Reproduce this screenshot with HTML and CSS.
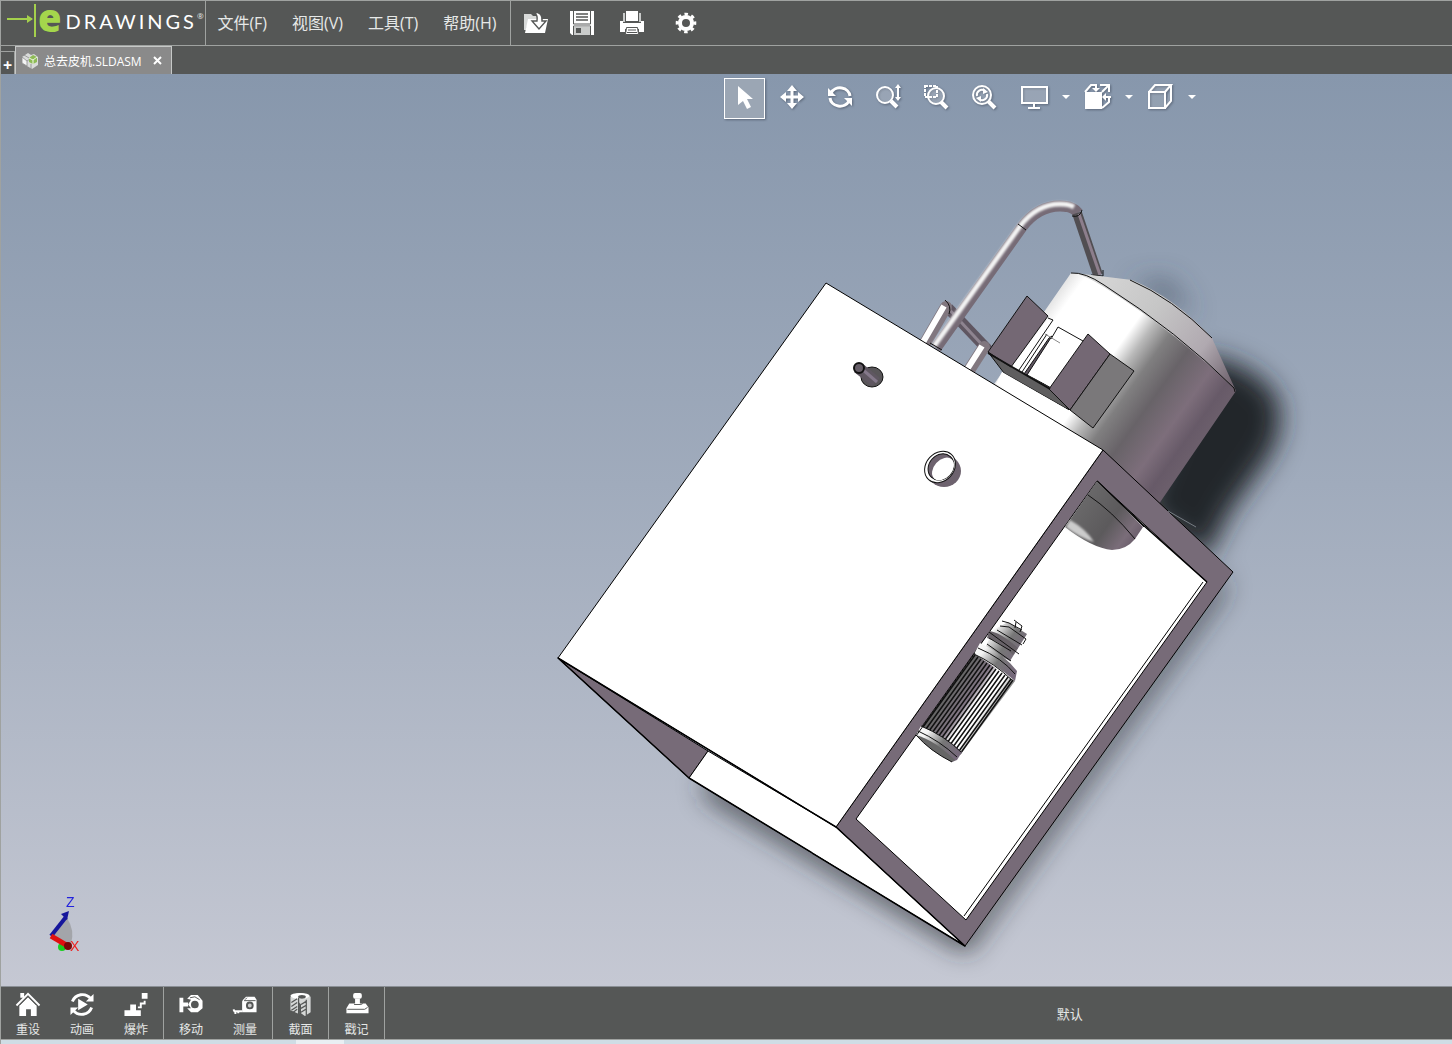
FILE: index.html
```
<!DOCTYPE html>
<html lang="zh-CN">
<head>
    <meta charset="UTF-8">
    <title>eDrawings</title>
    <link rel="stylesheet" href="styles.css">
</head>
<body>
    <div class="window">
        <header class="menubar">
            <div class="brand">
                <svg class="brand-mark" width="32" height="36" viewBox="0 0 32 36">
                    <path d="M1 16H26" stroke="#a4d04c" stroke-width="2"/>
                    <path d="M21 12L27 16L21 20Z" fill="#a4d04c"/>
                    <path d="M29 1V34" stroke="#a4d04c" stroke-width="2"/>
                </svg>
                <span class="brand-e">e</span>
                <span class="brand-name">DRAWINGS</span>
                <span class="brand-reg">®</span>
            </div>
            <nav class="menus">
                <button>文件(F)</button>
                <button>视图(V)</button>
                <button>工具(T)</button>
                <button>帮助(H)</button>
            </nav>
            <div class="file-tools">
                <button aria-label="打开">
                    <svg width="26" height="26" viewBox="0 0 26 26">
                        <path d="M1 4h7l2 2h9v3H6L3 20H1z" fill="#d8dad9"/>
                        <path d="M2 23L5 9h20l-3 14z" fill="#fff"/>
                        <path d="M11 2q9 0 8 9h4l-7 8-7-8h5q1-6-3-9z" fill="#fff" stroke="#555756" stroke-width="1.400"/>
                    </svg>
                </button>
                <button aria-label="保存">
                    <svg width="26" height="26" viewBox="0 0 26 26">
                        <path d="M1 1h24v24H3l-2-2z" fill="#fff"/>
                        <path d="M4.500 1v13h17V1M4.500 25v-9h17v9" fill="none" stroke="#555756"/>
                        <path d="M7 4h12M7 7h12M7 10h12" stroke="#555756" stroke-width="1.300"/>
                        <path d="M5 16.500h16V25H5z" fill="#c9cbca"/>
                        <path d="M7 18h5v5H7z" fill="#555756"/>
                    </svg>
                </button>
                <button class="wide" aria-label="打印">
                    <svg width="26" height="26" viewBox="0 0 26 26">
                        <path d="M7 1h12v10H7zM1 11h3v2h18v-2h3v11h-5v-4H6v4H1z" fill="#fff"/>
                        <path d="M4 3h2v9H4zM20 3h2v9h-2z" fill="#c9cbca"/>
                        <path d="M2 13h22v6H2z" fill="#fff"/>
                        <path d="M7.500 17.500h11l1 7h-13z" fill="#fff" stroke="#555756"/>
                        <path d="M9 20h8M8 22.500h10" stroke="#555756"/>
                    </svg>
                </button>
                <button class="wide" aria-label="选项">
                    <svg width="22" height="22" viewBox="0 0 22 22">
                        <circle cx="11" cy="11" r="6" fill="none" stroke="#fff" stroke-width="4"/>
                        <circle cx="11" cy="11" r="8.800" fill="none" stroke="#fff" stroke-width="3" stroke-dasharray="3.450 3.450" stroke-dashoffset="1.700"/>
                    </svg>
                </button>
            </div>
        </header>

        <div class="tabs">
            <button class="tab-add" aria-label="新建">+</button>
            <div class="tab">
                <svg width="18" height="18" viewBox="0 0 18 18">
                    <path d="M1 5l6-4 3 2 3-1 4 3v8l-6 4L1 11z" fill="#d9dbda"/>
                    <path d="M1 5l5 4v5l-5-3zM6 9l3-2M10 12v5M3 3l5 3" fill="#f4f4f4" stroke="#8b8b8b" stroke-width=".8"/>
                    <path d="M8 6l4-3 4 2v5l-4 2-4-2z" fill="#8dbb55"/>
                    <path d="M8 6l4 2 4-3M12 8v4" fill="none" stroke="#eef4e4"/>
                </svg>
                <span>总去皮机.SLDASM</span>
                <button class="tab-close" aria-label="关闭">
                    <svg width="10" height="10" viewBox="0 0 10 10"><path d="M1 1l7 7M8 1L1 8" stroke="#fff" stroke-width="2"/></svg>
                </button>
            </div>
        </div>

        <main class="viewport">
            <svg class="model" viewBox="1 74 1451 912" preserveAspectRatio="xMidYMid slice">
                <defs>
                    <linearGradient id="drum" gradientUnits="userSpaceOnUse" x1="1071" y1="273" x2="1236" y2="391">
                        <stop offset="0" stop-color="#e4e4e4"/>
                        <stop offset=".07" stop-color="#fff"/>
                        <stop offset=".4" stop-color="#fff"/>
                        <stop offset=".48" stop-color="#b9b9b9"/>
                        <stop offset=".57" stop-color="#807f80"/>
                        <stop offset=".69" stop-color="#686368"/>
                        <stop offset=".84" stop-color="#7d6e7b"/>
                        <stop offset=".94" stop-color="#675a68"/>
                        <stop offset="1" stop-color="#6b5e6b"/>
                    </linearGradient>
                    <linearGradient id="cone" gradientUnits="userSpaceOnUse" x1="1090" y1="280" x2="1230" y2="385">
                        <stop offset="0" stop-color="#d6d6d6"/>
                        <stop offset=".4" stop-color="#c6c6c6"/>
                        <stop offset=".75" stop-color="#b0a9b0"/>
                        <stop offset="1" stop-color="#70646f"/>
                    </linearGradient>
                    <linearGradient id="dome" gradientUnits="userSpaceOnUse" x1="1080" y1="505" x2="1136" y2="545">
                        <stop offset="0" stop-color="#696869"/>
                        <stop offset=".5" stop-color="#5c5a5c"/>
                        <stop offset=".8" stop-color="#7a6d79"/>
                        <stop offset="1" stop-color="#685b69"/>
                    </linearGradient>
                    <linearGradient id="motor" gradientUnits="userSpaceOnUse" x1="975" y1="655" x2="1015" y2="682">
                        <stop offset="0" stop-color="#666"/>
                        <stop offset=".4" stop-color="#827684"/>
                        <stop offset=".55" stop-color="#fff"/>
                        <stop offset=".8" stop-color="#fff"/>
                        <stop offset="1" stop-color="#777"/>
                    </linearGradient>
                    <linearGradient id="cap" x1="0" y1="0" x2="1" y2=".7">
                        <stop offset="0" stop-color="#fff"/>
                        <stop offset=".25" stop-color="#f4f4f4"/>
                        <stop offset=".6" stop-color="#777"/>
                        <stop offset="1" stop-color="#75687a"/>
                    </linearGradient>
                    <filter id="soft" x="-40%" y="-40%" width="180%" height="180%"><feGaussianBlur stdDeviation="13"/></filter>
                    <filter id="smooth" x="-20%" y="-20%" width="140%" height="140%"><feGaussianBlur stdDeviation="1"/></filter>
                </defs>

                <!-- shadows -->
                <g filter="url(#soft)">
                    <path d="M1200 355Q1252 362 1276 395Q1288 425 1268 458L1230 512L1206 560L1140 510Z" fill="#22252a"/>
                    <path d="M1130 285L1168 280L1195 315Z" fill="#44505f" opacity=".7"/>
                    <path d="M705 775L965 930L1220 575L1225 590L967 952L706 796Z" fill="#2c3035" opacity=".9"/>
                </g>

                <!-- pipes -->
                <g fill="none">
                    <path d="M948 308L988 350" stroke="#5f5661" stroke-width="11"/>
                    <path d="M948 308L986 349" stroke="#8e8490" stroke-width="3"/>
                    <path d="M924 345L946 307M968 372L984 347" stroke="#81777f" stroke-width="12" stroke-linecap="round"/>
                    <path d="M922 344L944 306M966 371L982 346" stroke="#fff" stroke-width="6"/>
                    <path d="M936 348L1022 227Q1038 206 1060 206Q1073 206 1078 213" stroke="#766b76" stroke-width="11"/>
                    <path d="M934 346L1020 226Q1037 204 1060 204Q1069 204 1074 207" stroke="#f4f4f4" stroke-width="5" filter="url(#smooth)"/>
                    <path d="M1077 213L1098 275" stroke="#514e52" stroke-width="10"/>
                    <path d="M1079 214L1100 275" stroke="#8d7e8c" stroke-width="3"/>
                    <path d="M1018 224L1026 230M1072 216Q1080 218 1082 210M945 300Q952 306 949 314M930 343L942 350M1091 275L1103 276L1103 270" stroke="#111"/>
                </g>

                <!-- drum -->
                <path d="M1071 273Q1085 272 1104 285Q1178 332 1236 391L1135 539L1080 520L990 390Z" fill="url(#drum)"/>
                <path d="M1075 273L1132 280Q1175 298 1212 338L1236 391Q1180 335 1104 287Q1088 277 1075 273Z" fill="url(#cone)"/>
                <path d="M1071 273Q1085 272 1104 285Q1178 332 1234 388L1235 392M1130 280Q1172 298 1212 338" fill="none" stroke="#111"/>

                <!-- bracket -->
                <g stroke="#111" stroke-linejoin="round">
                    <path d="M988 352L1004 373L1069 410L1053 389Z" fill="#5f5e5f"/>
                    <path d="M1002 372L1070 411L1063 421L996 384Z" fill="#fff" stroke="none"/>
                    <path d="M1048 319L1058 327L1080 338L1053 388L1011 366Z" fill="#fff" stroke="none"/>
                    <path d="M1027 296L1048 316L1011 367L988 352Z" fill="#746874"/>
                    <path d="M1048 318L1053 320L1019 370M1047 334L1022 372M1058 327L1083 341M1058 327L1051 339" fill="none"/>
                    <path d="M1049 338L1052 336L1027 375L1024 374Z" fill="#5f5661"/>
                    <path d="M1088 334L1110 354L1070 410L1049 389Z" fill="#746874"/>
                    <path d="M1110 354L1134 371L1093 428L1070 410Z" fill="#7a787a"/>
                    <path d="M988 353L1050 389" fill="none" stroke-width="2"/>
                    <path d="M1045 334L1060 343" stroke="#888"/>
                </g>

                <!-- cabinet -->
                <g stroke="#000" stroke-linejoin="round">
                    <path d="M1103 450L1233 572L965 946L836 827Z" fill="#776b78"/>
                    <path d="M1097 481L1207 582L966 920L856 819Z" fill="#fff"/>
                    <path d="M1203 582L964 916" fill="none"/>
                    <path d="M558 658L708 751L689 778Z" fill="#776b78"/>
                    <path d="M708 751L836 827L965 946L689 778Z" fill="#fff"/>
                    <path d="M826 283L1103 450L836 827L558 658Z" fill="#fff"/>
                    <path d="M558 658L836 827L965 946L689 778Z" fill="none" stroke-width="1.500"/>
                    <path d="M1097 481L1142 524L1207 582" fill="none" stroke-width="1.500"/>
                </g>
                <path d="M1168 511L1196 527" stroke="#777e84"/>

                <!-- drum outlet -->
                <path d="M1097 481L1143 527L1135 539Q1126 550 1112 550Q1092 548 1065 527Z" fill="url(#dome)"/>
                <path d="M1070 520Q1086 529 1094 542Q1080 538 1066 527Z" fill="#ccc" filter="url(#smooth)"/>
                <path d="M1088 495Q1112 511 1135 539M1097 481L1144 527" fill="none" stroke="#111"/>

                <!-- knob and ring -->
                <ellipse cx="872" cy="377" rx="11" ry="10" fill="#595659" stroke="#111"/>
                <path d="M863 364L880 378L872 386L854 372Z" fill="#5f5761"/>
                <path d="M862 369L877 382" stroke="#84788a" stroke-width="3"/>
                <circle cx="859" cy="368" r="5" fill="#655d67" stroke="#111" stroke-width="2"/>
                <ellipse cx="944" cy="471" rx="17" ry="16" fill="#6d626e"/>
                <ellipse cx="940" cy="467" rx="17" ry="14" transform="rotate(-48 940 467)" fill="#fff" stroke="#111"/>
                <ellipse cx="941" cy="467" rx="14" ry="12" transform="rotate(-48 941 467)" fill="#6d626e" stroke="#111"/>
                <ellipse cx="943" cy="469" rx="13" ry="9" transform="rotate(-48 943 469)" fill="#fff"/>

                <!-- motor -->
                <path d="M993 630L1008 622L1027 634L1010 661L985 648Z" fill="url(#cap)"/>
                <path d="M989 631Q1000 632 1018 648L1013 655Q1001 642 987 638Z" fill="#686268"/>
                <path d="M1002 621l7 2 13 7M1000 626l9 1 17 12-3 5M997 630l25 15M989 632l30 22M989 638l22 13M987 644l24 17M1014 620l8 6-2 6M1016 622l-1 6" fill="none" stroke="#111"/>
                <path d="M975 654L1015 681L960 755L921 728Z" fill="url(#motor)"/>
                <path d="M975 655l-52 72m55-70l-52 72m55-70l-52 72m55-70l-52 72m55-70l-52 72m55-70l-52 72m55-70l-52 72m55-70l-52 72m55-70l-52 72m55-70l-52 72m55-70l-52 72m55-70l-52 72m55-70l-52 72m54-71l-53 74" fill="none" stroke="#111" stroke-width="1.500"/>
                <path d="M980 643Q1004 654 1017 671L1015 681Q994 663 974 654Z" fill="url(#cap)"/>
                <path d="M921 726Q945 736 962 752L957 760L952 762Q930 751 916 735Z" fill="url(#cap)"/>
                <path d="M916 735Q934 740 955 760L952 762Q930 751 916 735Z" fill="#666"/>
                <path d="M978 648Q1002 658 1015 674M974 654Q994 663 1013 681M921 726Q945 736 961 752M918 731Q940 741 957 757M916 735Q930 751 952 762" fill="none" stroke="#111"/>
                <path d="M975 653L916 736" stroke="#111"/>

                <!-- axis triad -->
                <path d="M51 936L67 918Q75 930 71 944Z" fill="#a3a5aa"/>
                <circle cx="62" cy="947" r="4" fill="#18cf20"/>
                <path d="M51 936L66 917" stroke="#16169c" stroke-width="4"/>
                <path d="M61 914L69 911L67 920Z" fill="#16169c"/>
                <path d="M51 936L68 946" stroke="#e01010" stroke-width="5"/>
                <circle cx="68" cy="946" r="4" fill="#7a0808"/>
                <text class="axis" x="66" y="907" fill="#2222dd">Z</text>
                <text class="axis" x="70" y="951" fill="#ee2222">X</text>
            </svg>

            <div class="view-tools">
                <button class="tool active" aria-label="选择">
                    <svg width="28" height="28" viewBox="0 0 28 28"><path d="M8 3v19l5-4 4 8 4-2-4-8h6z" fill="#fff"/></svg>
                </button>
                <button class="tool" aria-label="平移">
                    <svg width="28" height="28" viewBox="0 0 28 28"><path d="M14 5v18M5 14h18" stroke="#fff" stroke-width="3"/><path d="M14 2l5 6H9zM14 26l5-6H9zM2 14l6-5v10zM26 14l-6-5v10z" fill="#fff"/></svg>
                </button>
                <button class="tool" aria-label="旋转">
                    <svg width="28" height="28" viewBox="0 0 28 28"><path d="M5 10a10 9 0 0 1 19 3M23 18a10 9 0 0 1-19-3" fill="none" stroke="#fff" stroke-width="3"/><path d="M2 5v8h8zM26 23v-8h-8z" fill="#fff"/></svg>
                </button>
                <button class="tool" aria-label="缩放">
                    <svg width="28" height="28" viewBox="0 0 28 28"><circle cx="11" cy="12" r="8" fill="#fff3" stroke="#fff" stroke-width="2"/><path d="M17 18l6 6" stroke="#fff" stroke-width="4"/><path d="M24 4v12" stroke="#fff" stroke-width="2"/><path d="M24 1l3 4h-6zM24 18l3-4h-6z" fill="#fff"/></svg>
                </button>
                <button class="tool" aria-label="区域放大">
                    <svg width="28" height="28" viewBox="0 0 28 28"><path d="M3 3h12v11H3z" fill="none" stroke="#fff" stroke-width="2" stroke-dasharray="3 1"/><circle cx="14" cy="13" r="8" fill="#fff3" stroke="#fff" stroke-width="2"/><path d="M19 19l6 6" stroke="#fff" stroke-width="4"/></svg>
                </button>
                <button class="tool" aria-label="整屏显示">
                    <svg width="28" height="28" viewBox="0 0 28 28"><circle cx="12" cy="12" r="9" fill="#fff2" stroke="#fff" stroke-width="2"/><path d="M18 18l7 7" stroke="#fff" stroke-width="4"/><path d="M7 13a5 5 0 0 1 8-5M17 11a5 5 0 0 1-8 5" fill="none" stroke="#fff" stroke-width="2"/><path d="M13 5l5 4-5 2zM11 19l-5-4 5-2z" fill="#fff"/></svg>
                </button>
                <div class="tool-group">
                    <button class="tool" aria-label="显示">
                        <svg width="28" height="28" viewBox="0 0 28 28"><path d="M2 4h25v16H2z" fill="#fff3" stroke="#fff" stroke-width="2"/><path d="M14 20v5M8 25h12" stroke="#fff" stroke-width="2"/></svg>
                    </button>
                    <button class="caret" aria-label="显示选项"></button>
                </div>
                <div class="tool-group">
                    <button class="tool" aria-label="视图定向">
                        <svg width="28" height="28" viewBox="0 0 28 28"><path d="M2 9h17v17H2z" fill="#fff"/><path d="M2 9l6-7h6M17 2h9v7M19 9l7-7M26 13v6l-7 6" fill="none" stroke="#fff" stroke-width="2"/><path d="M13 2v5M28 14h-6" stroke="#fff" stroke-width="2"/><path d="M13 9l4-4H9zM19 14l4-4v8z" fill="#fff"/></svg>
                    </button>
                    <button class="caret" aria-label="定向选项"></button>
                </div>
                <div class="tool-group">
                    <button class="tool" aria-label="显示样式">
                        <svg width="28" height="28" viewBox="0 0 28 28"><path d="M3 9h16v16H3zM3 9l6-7h16l-6 7M25 2v16l-6 7" fill="#fff2" stroke="#fff" stroke-width="2"/></svg>
                    </button>
                    <button class="caret" aria-label="样式选项"></button>
                </div>
            </div>
        </main>

        <footer class="actions">
            <div class="action-group">
                <button>
                    <svg width="26" height="26" viewBox="0 0 26 26"><path d="M5 1h4v5H5zM13 5l9 9v11h-6v-7h-5v7H4V14z" fill="#fff"/><path d="M1 14L13 2l12 12" fill="none" stroke="#fff" stroke-width="2"/><path d="M4 14l9-9 9 9" fill="none" stroke="#555756"/></svg>
                    <span>重设</span>
                </button>
                <button>
                    <svg width="26" height="26" viewBox="0 0 26 26"><path d="M3 10a11 11 0 0 1 19-3M23 16a11 11 0 0 1-19 3" fill="none" stroke="#fff" stroke-width="3"/><path d="M25 2v8h-8zM1 24v-8h8zM9 7v12l10-6z" fill="#fff"/></svg>
                    <span>动画</span>
                </button>
                <button>
                    <svg width="26" height="26" viewBox="0 0 26 26"><path d="M1 19h6v-6h6v6h5v6H1zM19 1h6v6h-6z" fill="#fff"/><path d="M22 9v3h-4v4h-3" fill="none" stroke="#fff" stroke-width="2"/></svg>
                    <span>爆炸</span>
                </button>
            </div>
            <div class="action-group">
                <button>
                    <svg width="26" height="26" viewBox="0 0 26 26"><path d="M1 6h4v5h5v4H5v6H1z" fill="#fff"/><path d="M9 7l4-4h7l5 6v8l-5 4h-7l-4-4h4l-3-4 3-5z" fill="#fff"/><circle cx="17" cy="13" r="4" fill="#555756"/><path d="M12 6l5-1 5 3" fill="none" stroke="#555756"/></svg>
                    <span>移动</span>
                </button>
                <button>
                    <svg width="26" height="26" viewBox="0 0 26 26"><path d="M11 8l3-3h9l2 3v13H10V10z" fill="#fff"/><path d="M12 9h12M13 8l2-2" stroke="#555756"/><circle cx="18" cy="14" r="3" fill="#ccc" stroke="#555756" stroke-width="2"/><path d="M10 20H2l-1-2M3 20v3M6 19v3" fill="none" stroke="#fff" stroke-width="2"/></svg>
                    <span>测量</span>
                </button>
            </div>
            <div class="action-group">
                <button>
                    <svg width="26" height="26" viewBox="0 0 26 26"><path d="M2 5q10-8 21 0v16l-6 4-4-3v-9l-2-2v12l-9-4z" fill="#d5d7d6"/><ellipse cx="12" cy="4" rx="10" ry="3" fill="#fff"/><ellipse cx="14" cy="5" rx="4" ry="2" fill="#555756"/><path d="M3 11l6-4M3 15l6-4M3 19l6-4M5 21l4-3M13 13l5-3M13 17l5-3M13 21l5-3M10.500 6v17M18.500 8v16" stroke="#555756" stroke-width="1.300"/></svg>
                    <span>截面</span>
                </button>
            </div>
            <div class="action-group">
                <button>
                    <svg width="26" height="26" viewBox="0 0 26 26"><rect x="9" y="1" width="9" height="6" rx="2" fill="#fff"/><path d="M11 7h5v6h-5zM5 12h17l3 4v6H2v-5z" fill="#fff"/><path d="M3 18h18l3-2M10 13h7l2-1" fill="none" stroke="#555756"/></svg>
                    <span>戳记</span>
                </button>
            </div>
            <span class="config">默认</span>
        </footer>
        <div class="desktop-edge"></div>
    </div>
</body>
</html>
```
FILE: styles.css
```
* {
    box-sizing: border-box;
}

body {
    margin: 0;
    font-family: "Open Sans", "Noto Sans CJK SC", sans-serif;
    color: #e6e8e7;
}

button {
    margin: 0;
    padding: 0;
    border: none;
    background: none;
    color: inherit;
    font: inherit;
    cursor: pointer;
}

svg {
    display: block;
}

.window {
    display: flex;
    flex-direction: column;
    height: 100vh;
    border-left: 1px solid #9fa2a0;
}

.menubar {
    display: flex;
    height: 46px;
    border-top: 1px solid #9fa2a0;
    border-bottom: 1px solid #9fa2a0;
    background: #555756;
}

.brand {
    display: flex;
    align-items: flex-start;
    width: 205px;
    padding: 2px 0 0 5px;
    border-right: 1px solid #9fa2a0;
    line-height: 36px;
    white-space: nowrap;
}

.brand-mark {
    flex: none;
}

.brand-e {
    margin-right: 4px;
    color: #a4d64c;
    font-size: 38px;
    font-weight: 800;
    line-height: 28px;
}

.brand-name {
    color: #fff;
    font-family: Lato, sans-serif;
    font-size: 20px;
    letter-spacing: 3px;
}

.brand-reg {
    font-size: 8px;
    line-height: 26px;
}

.menus {
    display: flex;
    justify-content: center;
    gap: 25px;
    width: 305px;
    padding: 0 2px 2px 0;
    border-right: 1px solid #9fa2a0;
    font-size: 16px;
}

.file-tools {
    display: flex;
    align-items: center;
    padding-left: 2px;
}

.file-tools button {
    display: flex;
    justify-content: center;
    width: 46px;
}

.file-tools .wide {
    width: 54px;
}

.tabs {
    display: flex;
    height: 28px;
    background: #555756;
    font-size: 12px;
}

.tab-add {
    width: 14px;
    height: 23px;
    margin-top: 5px;
    border: 1px solid #9fa2a0;
    border-width: 1px 1px 0 0;
    color: #fff;
    font-size: 16px;
    font-weight: 700;
    line-height: 26px;
}

.tab {
    display: flex;
    align-items: center;
    gap: 5px;
    padding: 0 8px 0 5px;
    border: 1px solid #c6c8c7;
    border-bottom: none;
    background: #8a8a8a;
    color: #fff;
}

.tab-close {
    margin-left: 6px;
}

.viewport {
    position: relative;
    flex: 1;
    min-height: 0;
    overflow: hidden;
    background: linear-gradient(#8797ac, #a0abbc 45%, #c5c8d3);
}

.model {
    width: 100%;
    height: 100%;
}

.axis {
    font-family: "Liberation Sans", sans-serif;
    font-size: 14px;
}

.view-tools {
    position: absolute;
    top: 4px;
    left: calc(50% - 3px);
    display: flex;
    gap: 7px;
}

.tool {
    display: flex;
    align-items: center;
    justify-content: center;
    width: 41px;
    height: 41px;
    padding-bottom: 3px;
    filter: drop-shadow(1px 1px 1px #5b6779);
}

.active {
    border: 1px solid #fff;
    background: #9ba6b4;
}

.tool-group {
    display: flex;
    margin-right: -7px;
}

.tool-group:nth-child(7) {
    margin-left: 2px;
}

.caret {
    display: flex;
    align-items: center;
    justify-content: center;
    width: 22px;
    padding-bottom: 3px;
}

.caret::before {
    content: "";
    border: 4px solid transparent;
    border-top-color: #fff;
    border-bottom: none;
}

.actions {
    display: flex;
    height: 54px;
    border-top: 1px solid #8a8f95;
    border-bottom: 1px solid #9fa2a0;
    background: #555756;
}

.action-group {
    display: flex;
    border-right: 1px solid #9fa2a0;
}

.action-group button {
    display: flex;
    flex-direction: column;
    align-items: center;
    gap: 4px;
    width: 55px;
    padding-top: 5px;
    font-size: 12px;
    line-height: 18px;
}

.action-group:nth-child(-n+2) button {
    width: 54px;
}

.config {
    margin-left: 46.3%;
    align-self: center;
    font-size: 13px;
}

.desktop-edge {
    height: 4px;
    background: linear-gradient(90deg, #cfdde5 295px, #e9eff3 295px 343px, #cfdde5 343px);
}
```
